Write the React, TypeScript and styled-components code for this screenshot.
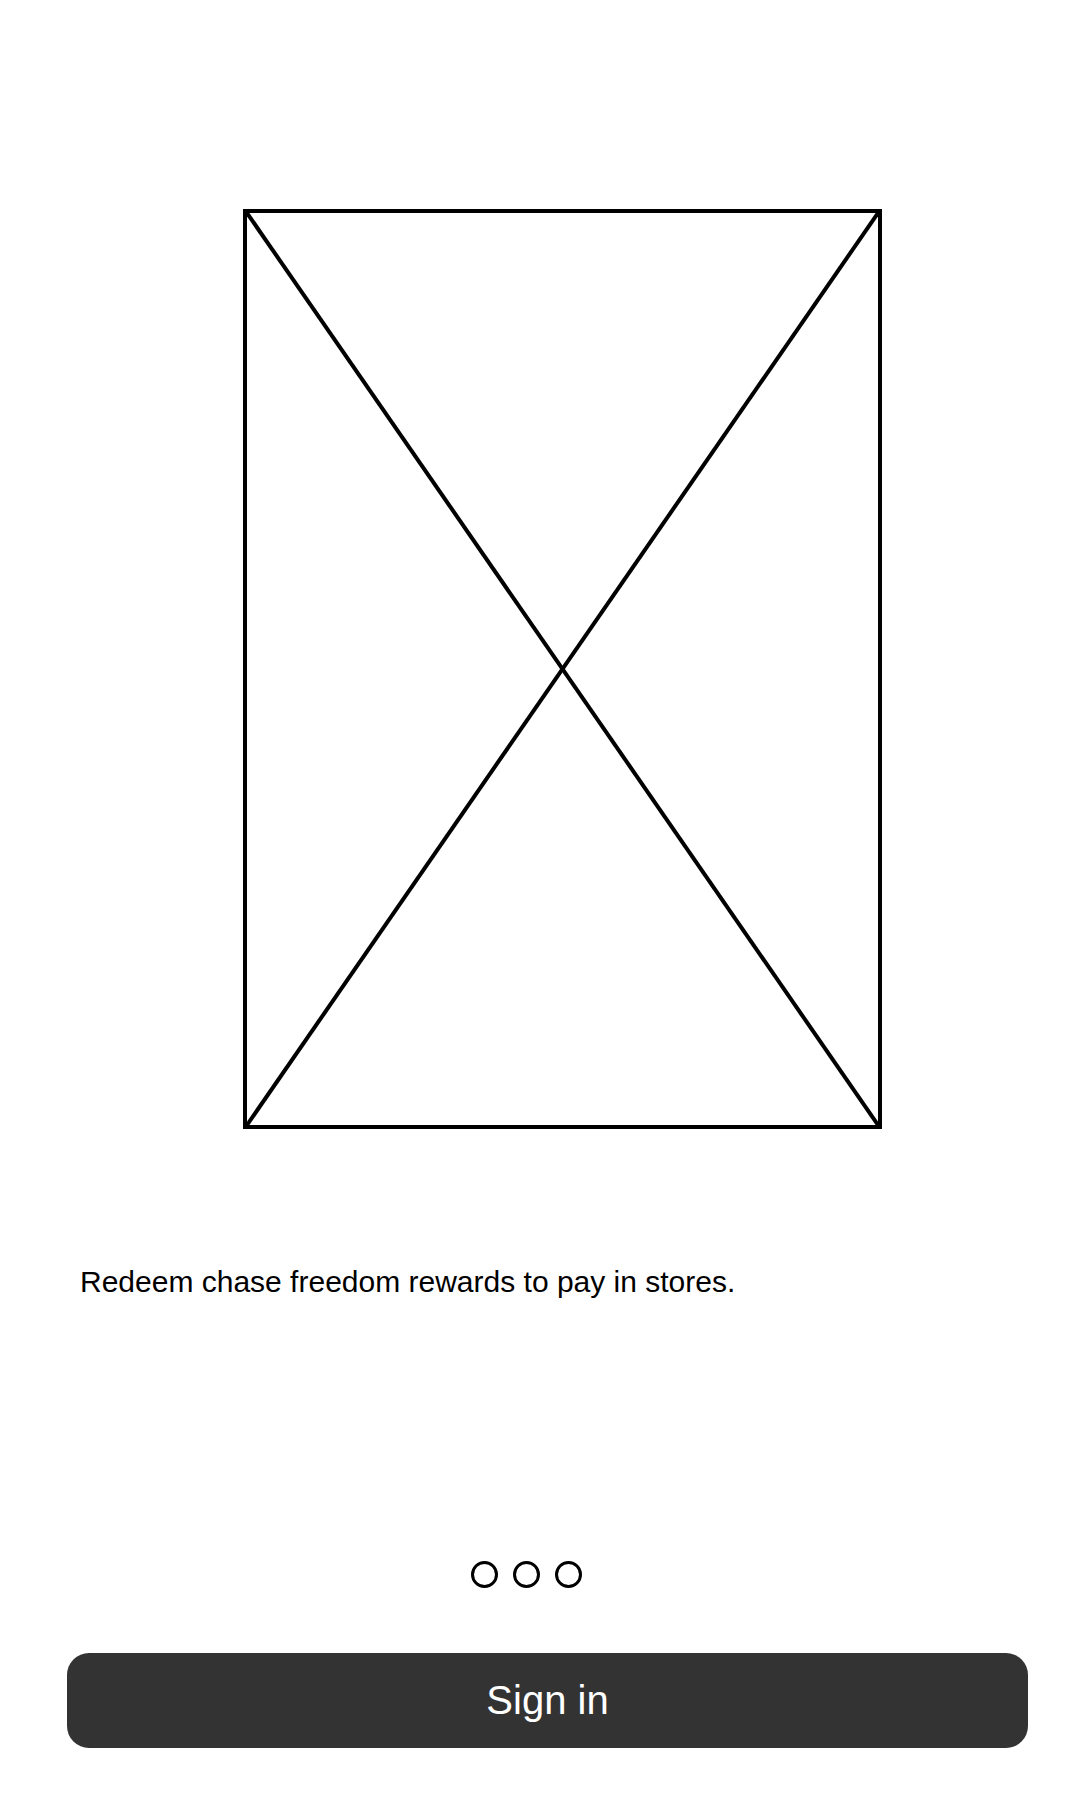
import React from "react";
import styled, { createGlobalStyle } from "styled-components";

const GlobalStyle = createGlobalStyle`
  html, body {
    margin: 0;
    padding: 0;
    background: #ffffff;
  }
  body {
    font-family: "Liberation Sans", Arial, sans-serif;
  }
`;

const Screen = styled.div`
  width: 1080px;
  min-height: 1800px;
  display: flex;
  flex-direction: column;
  background: #ffffff;
`;

const ImageArea = styled.div`
  padding: 209px 0 0 243px;
`;

const Placeholder = styled.div`
  width: 639px;
  height: 920px;
  box-sizing: border-box;
  border: 4px solid #000000;
  svg {
    display: block;
    width: 100%;
    height: 100%;
  }
`;

const Caption = styled.p`
  margin: 135px 0 0 80px;
  font-size: 30px;
  line-height: 36px;
  color: #000000;
`;

const Dots = styled.div`
  display: flex;
  gap: 15px;
  margin-top: 261px;
  padding-left: 471px;
`;

const Dot = styled.span<{ $active?: boolean }>`
  width: 27px;
  height: 27px;
  box-sizing: border-box;
  border-radius: 50%;
  border: 3px solid #000000;
  background: ${(p) => (p.$active ? "#000000" : "transparent")};
`;

const SignInButton = styled.button`
  margin: 65px 0 0 67px;
  width: 961px;
  height: 95px;
  border: none;
  border-radius: 22px;
  background: #333333;
  color: #ffffff;
  font-family: "Liberation Sans", Arial, sans-serif;
  font-size: 40px;
  cursor: pointer;
`;

const App = () => {
  return (
    <Screen>
      <GlobalStyle />
      <ImageArea>
        <Placeholder>
          <svg viewBox="0 0 100 100" preserveAspectRatio="none">
            <line x1="0" y1="0" x2="100" y2="100" stroke="#000" strokeWidth="4" vectorEffect="non-scaling-stroke" />
            <line x1="100" y1="0" x2="0" y2="100" stroke="#000" strokeWidth="4" vectorEffect="non-scaling-stroke" />
          </svg>
        </Placeholder>
      </ImageArea>
      <Caption>Redeem chase freedom rewards to pay in stores.</Caption>
      <Dots>
        <Dot />
        <Dot />
        <Dot />
      </Dots>
      <SignInButton>Sign in</SignInButton>
    </Screen>
  );
};

export default App;
